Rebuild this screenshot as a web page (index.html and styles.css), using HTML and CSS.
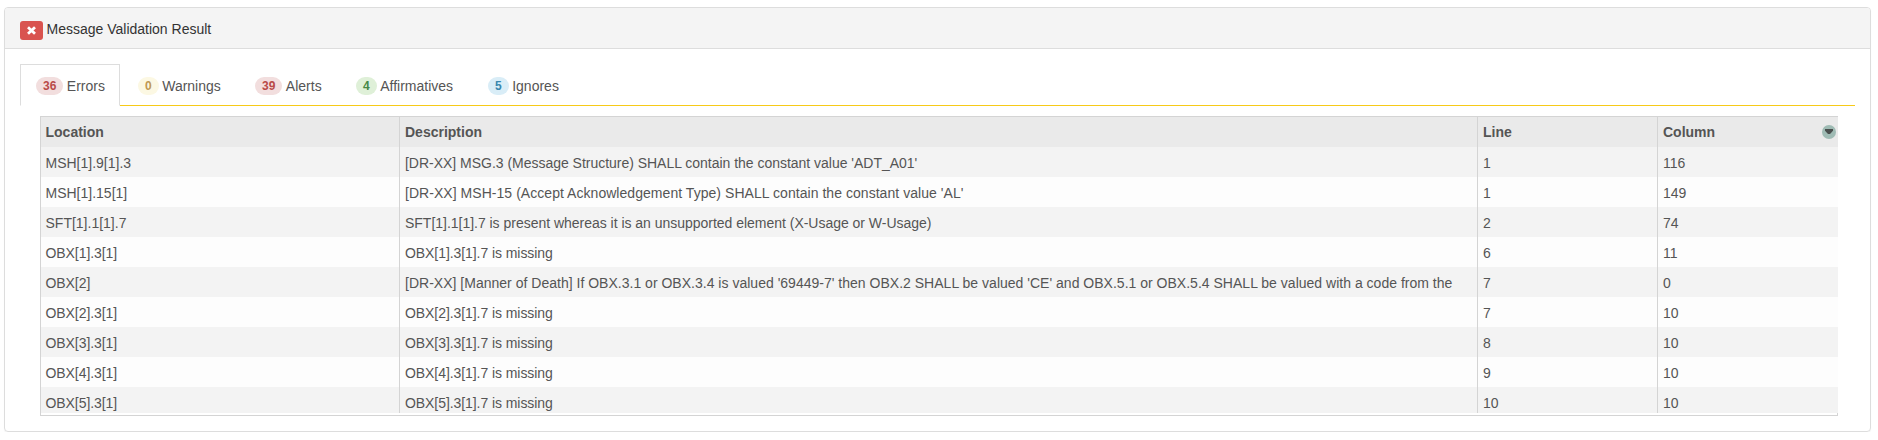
FILE: index.html
```html
<!DOCTYPE html>
<html lang="en">
<head>
<meta charset="utf-8">
<title>Message Validation Result</title>
<link rel="stylesheet" href="styles.css">
</head>
<body>
<section class="panel">
  <header class="panel-heading">
    <button class="close" type="button" aria-label="Close"><svg width="9" height="9" viewBox="0 0 9 9"><path d="M1 1.2 8 7.8M8 1.2 1 7.8" stroke="#fff" stroke-width="2.8"/></svg></button>
    <span class="title">Message Validation Result</span>
  </header>
  <div class="panel-body">
    <nav class="tabs">
      <a class="tab tab-errors active"><b class="badge danger">36</b><span>Errors</span></a>
      <a class="tab tab-warnings"><b class="badge warning">0</b><span>Warnings</span></a>
      <a class="tab tab-alerts"><b class="badge danger">39</b><span>Alerts</span></a>
      <a class="tab tab-affirmatives"><b class="badge success">4</b><span>Affirmatives</span></a>
      <a class="tab tab-ignores"><b class="badge info">5</b><span>Ignores</span></a>
      <i class="tab-rest"></i>
    </nav>
    <div class="grid">
      <div class="viewport">
        <div class="row head"><div>Location</div><div>Description</div><div>Line</div><div class="last">Column<svg class="menu" width="14" height="14" viewBox="0 0 14 14"><circle cx="7" cy="7" r="7" fill="#9fbbb4"/><path d="M3 4h8v1.8L8 9H6L3 5.8z" fill="#4a4f4e"/></svg></div></div>
        <div class="row"><div>MSH[1].9[1].3</div><div><span class="snug">[DR-XX] MSG.3 (Message Structure) SHALL contain the constant value 'ADT_A01'</span></div><div>1</div><div>116</div></div>
        <div class="row"><div>MSH[1].15[1]</div><div><span class="loose">[DR-XX] MSH-15 (Accept Acknowledgement Type) SHALL contain the constant value 'AL'</span></div><div>1</div><div>149</div></div>
        <div class="row"><div>SFT[1].1[1].7</div><div><span class="snug">SFT[1].1[1].7 is present whereas it is an unsupported element (X-Usage or W-Usage)</span></div><div>2</div><div>74</div></div>
        <div class="row"><div class="tight">OBX[1].3[1]</div><div class="tight">OBX[1].3[1].7 is missing</div><div>6</div><div>11</div></div>
        <div class="row"><div class="tight">OBX[2]</div><div><span class="long">[DR-XX] [Manner of Death] If OBX.3.1 or OBX.3.4 is valued '69449-7' then OBX.2 SHALL be valued 'CE' and OBX.5.1 or OBX.5.4 SHALL be valued with a code from the</span></div><div>7</div><div>0</div></div>
        <div class="row"><div class="tight">OBX[2].3[1]</div><div class="tight">OBX[2].3[1].7 is missing</div><div>7</div><div>10</div></div>
        <div class="row"><div class="tight">OBX[3].3[1]</div><div class="tight">OBX[3].3[1].7 is missing</div><div>8</div><div>10</div></div>
        <div class="row"><div class="tight">OBX[4].3[1]</div><div class="tight">OBX[4].3[1].7 is missing</div><div>9</div><div>10</div></div>
        <div class="row"><div class="tight">OBX[5].3[1]</div><div class="tight">OBX[5].3[1].7 is missing</div><div>10</div><div>10</div></div>
      </div>
    </div>
  </div>
</section>
</body>
</html>
```
FILE: styles.css
```css
* { box-sizing: border-box; }
body {
  margin: 0;
  padding: 7px 7px 0 4px;
  background: #fff;
  color: #555;
  font: 14px/20px "Liberation Sans", Arial, sans-serif;
}
.panel {
  height: 425px;
  border: 1px solid #ddd;
  border-radius: 4px;
  box-shadow: 0 1px 1px rgba(0, 0, 0, .05);
}
.panel-heading {
  display: flex;
  gap: 4px;
  height: 41px;
  padding: 13px 15px 0;
  border-bottom: 1px solid #ddd;
  border-radius: 3px 3px 0 0;
  background: #f4f4f4;
}
.close {
  display: flex;
  align-items: center;
  justify-content: center;
  width: 23px;
  height: 19px;
  padding: 0 1px 1px 0;
  border: 0;
  border-radius: 3px;
  background: #d9534f;
}
.title {
  margin: -2px 0 0 -.5px;
  color: #333;
}
.panel-body { padding: 15px 15px 0; }
.tabs {
  display: flex;
  height: 42px;
}
.tab {
  display: flex;
  align-items: flex-start;
  gap: 3.5px;
  padding: 13px 0 0 16px;
  border-bottom: 1px solid #f7ca18;
  white-space: nowrap;
}
.tab.active {
  padding: 12px 0 0 15px;
  border: 1px solid #ddd;
  border-bottom-color: transparent;
}
.tab-errors { width: 100px; }
.tab-warnings { width: 119px; padding-left: 18px; }
.tab-alerts { width: 101px; }
.tab-affirmatives { width: 132px; }
.tab-ignores { width: 90px; }
.tab-rest { flex: 1; border-bottom: 1px solid #f7ca18; }
.badge {
  height: 18px;
  padding: 0 7px;
  border-radius: 9px;
  font-size: 12px;
  line-height: 19px;
}
.badge + span { margin-top: -1px; }
.danger { background: #f2dede; color: #b94a48; }
.warning { background: #fcf8e3; color: #c09853; }
.success { background: #dff0d8; color: #468847; }
.info { background: #d9edf7; color: #3a87ad; }
.grid {
  width: 1798px;
  height: 300px;
  margin: 10px 0 0 20px;
  border: 1px solid #d4d4d4;
}
.viewport {
  height: 296px;
  margin-right: -1px;
  overflow: hidden;
}
.row {
  display: grid;
  grid-template-columns: 359px 1078px 180px 180px;
  height: 30px;
  background: #f3f3f3;
  line-height: 32px;
  white-space: nowrap;
}
.row:nth-child(odd) { background: #fdfdfd; }
.row > div {
  padding-left: 5px;
  border-right: 1px solid #d4d4d4;
}
.row > div:first-child { padding-left: 4.5px; }
.row > div:last-child { border-right: 0; }
.row.head {
  background: #eaeaea;
  font-weight: bold;
  line-height: 30px;
}
.row .last {
  display: flex;
  justify-content: space-between;
  padding-right: 2px;
}
.menu { margin-top: 8px; }
.snug { letter-spacing: -.02px; }
.loose { letter-spacing: .045px; }
.long { letter-spacing: .012px; }
.tight { letter-spacing: -.07px; }
```
